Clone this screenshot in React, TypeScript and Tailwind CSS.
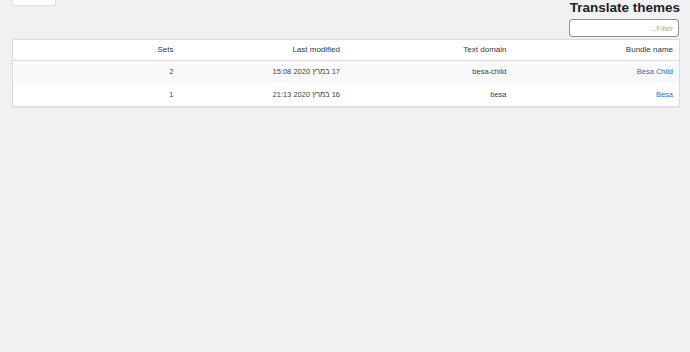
import React from "react";

const rows = [
  { name: "Besa Child", domain: "besa-child", modified: "17 במרץ 2020 15:08", sets: "2" },
  { name: "Besa", domain: "besa", modified: "16 במרץ 2020 21:13", sets: "1" },
];

export default function App() {
  return (
    <div
      dir="rtl"
      className="min-h-[352px] bg-[#f1f1f1] font-['Liberation_Sans','Noto_Sans',Arial,sans-serif] text-[#3c434a]"
    >
      <div className="flex items-start justify-between pr-[10px] pl-[12px]">
        <h1 className="text-[13.5px] leading-[16px] font-bold text-[#1d2327]">Translate themes</h1>
        <div className="h-[6px] w-[44px] rounded-b-[3px] border border-t-0 border-[#dcdcde] bg-white" />
      </div>
      <div className="flex pr-[11px] pt-[3px]">
        <input
          type="text"
          placeholder="Filter..."
          className="h-[18px] w-[110px] rounded-[3px] border border-[#8c8f94] bg-white px-[5px] text-[7.5px] placeholder:text-[#a7aaad] outline-none"
        />
      </div>
      <div className="mr-[10px] ml-[12px] mt-[2px] border border-[#dcdcde] bg-white shadow-[0_1px_1px_rgba(0,0,0,0.04)]">
        <table className="w-full table-fixed border-collapse">
          <thead>
            <tr className="h-[20px] border-b border-[#dcdcde]">
              <th className="w-1/4 pr-[6px] text-right text-[8px] font-normal text-[#32373c]">Bundle name</th>
              <th className="w-1/4 pr-[6px] text-right text-[8px] font-normal text-[#32373c]">Text domain</th>
              <th className="w-1/4 pr-[6px] text-right text-[8px] font-normal text-[#32373c]">Last modified</th>
              <th className="w-1/4 pr-[6px] text-right text-[8px] font-normal text-[#32373c]">Sets</th>
            </tr>
          </thead>
          <tbody>
            {rows.map((r, i) => (
              <tr key={r.domain} className={i % 2 === 0 ? "h-[23px] bg-[#f9f9f9]" : "h-[23px] bg-white"}>
                <td className="pr-[6px] text-right text-[7.5px]">
                  <a className="text-[#2271b1]">{r.name}</a>
                </td>
                <td className="pr-[6px] text-right text-[7.5px]">{r.domain}</td>
                <td className="pr-[6px] text-right text-[7.5px]">{r.modified}</td>
                <td className="pr-[6px] text-right text-[7.5px]">{r.sets}</td>
              </tr>
            ))}
          </tbody>
        </table>
      </div>
    </div>
  );
}
